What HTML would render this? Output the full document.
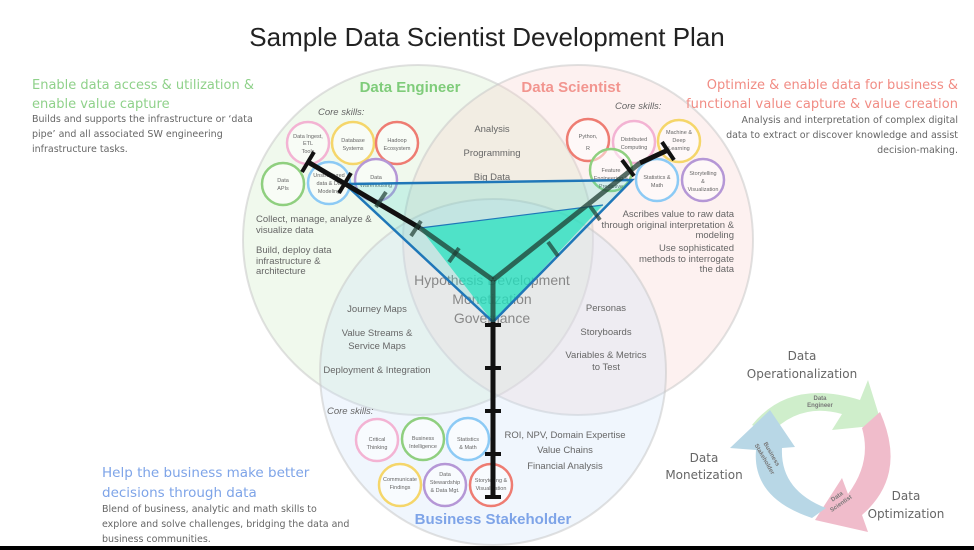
<!DOCTYPE html>
<html><head><meta charset="utf-8"><style>
body{margin:0;width:974px;height:550px;overflow:hidden;background:#fff;font-family:"Liberation Sans",sans-serif}
svg{position:absolute;left:0;top:0}
</style></head><body>
<svg width="974" height="550" viewBox="0 0 974 550" font-family="Liberation Sans, sans-serif">
<rect x="0" y="546" width="974" height="4" fill="#000"/>
<text x="487" y="46" text-anchor="middle" font-size="26" fill="#222">Sample Data Scientist Development Plan</text>
<!-- venn -->
<circle cx="418" cy="240" r="175" fill="rgba(205,235,195,0.3)" stroke="rgba(200,200,200,0.55)" stroke-width="2"/>
<circle cx="578" cy="240" r="175" fill="rgba(250,210,205,0.3)" stroke="rgba(200,200,200,0.55)" stroke-width="2"/>
<circle cx="493" cy="372" r="173" fill="rgba(205,225,250,0.3)" stroke="rgba(200,200,200,0.55)" stroke-width="2"/>
<text x="410" y="92" text-anchor="middle" font-size="15" font-weight="bold" fill="#7fcc7a">Data Engineer</text>
<text x="571" y="92" text-anchor="middle" font-size="15" font-weight="bold" fill="#f2958f">Data Scientist</text>
<text x="493" y="524" text-anchor="middle" font-size="15" font-weight="bold" fill="#7ea4e8">Business Stakeholder</text>
<g font-size="9.5" fill="#666" font-style="italic">
<text x="318" y="115">Core skills:</text><text x="615" y="109">Core skills:</text><text x="327" y="414">Core skills:</text></g>
<g font-size="9.5" fill="#666" text-anchor="middle">
<text x="492" y="132">Analysis</text><text x="492" y="156">Programming</text><text x="492" y="180">Big Data</text>
<text x="377" y="312">Journey Maps</text><text x="377" y="336">Value Streams &amp;</text><text x="377" y="349">Service Maps</text><text x="377" y="373">Deployment &amp; Integration</text>
<text x="606" y="311">Personas</text><text x="606" y="335">Storyboards</text><text x="606" y="358">Variables &amp; Metrics</text><text x="606" y="370">to Test</text>
<text x="565" y="438">ROI, NPV, Domain Expertise</text><text x="565" y="453">Value Chains</text><text x="565" y="469">Financial Analysis</text>
</g>
<g font-size="9.5" fill="#666">
<text x="256" y="222">Collect, manage, analyze &amp;</text><text x="256" y="233">visualize data</text>
<text x="256" y="253">Build, deploy data</text><text x="256" y="264">infrastructure &amp;</text><text x="256" y="274">architecture</text></g>
<g font-size="9.5" fill="#666" text-anchor="end">
<text x="734" y="217">Ascribes value to raw data</text><text x="734" y="228">through original interpretation &amp;</text><text x="734" y="238">modeling</text>
<text x="734" y="251">Use sophisticated</text><text x="734" y="262">methods to interrogate</text><text x="734" y="272">the data</text></g>
<g font-size="14" fill="#888" text-anchor="middle"><text x="492" y="285">Hypothesis Development</text><text x="492" y="304">Monetization</text><text x="492" y="323">Governance</text></g>
<!-- skill circles -->
<g fill="rgba(255,255,255,0.5)" stroke-width="2.5">
<circle cx="308" cy="143" r="21" stroke="#f3b3d3"/><circle cx="353" cy="143" r="21" stroke="#f5d66a"/><circle cx="397" cy="143" r="21" stroke="#ee7c72"/>
<circle cx="283" cy="184" r="21" stroke="#8fcf7f"/><circle cx="329" cy="183" r="21" stroke="#8ccaf5"/><circle cx="376" cy="180" r="21" stroke="#b597d6"/>
<circle cx="588" cy="140" r="21" stroke="#ee7c72"/><circle cx="634" cy="142" r="21" stroke="#f3b3d3"/><circle cx="679" cy="141" r="21" stroke="#f5d66a"/>
<circle cx="611" cy="170" r="21" stroke="#8fcf7f"/><circle cx="657" cy="180" r="21" stroke="#8ccaf5"/><circle cx="703" cy="180" r="21" stroke="#b597d6"/>
<circle cx="377" cy="440" r="21" stroke="#f3b3d3"/><circle cx="423" cy="439" r="21" stroke="#8fcf7f"/><circle cx="468" cy="439" r="21" stroke="#8ccaf5"/>
<circle cx="400" cy="485" r="21" stroke="#f5d66a"/><circle cx="445" cy="485" r="21" stroke="#b597d6"/><circle cx="491" cy="485" r="21" stroke="#ee7c72"/>
</g>
<g font-size="5.5" fill="#666" text-anchor="middle">
<text x="308" y="138">Data Ingest,</text><text x="308" y="145">ETL</text><text x="308" y="153">Tools</text>
<text x="353" y="142">Database</text><text x="353" y="150">Systems</text>
<text x="397" y="142">Hadoop</text><text x="397" y="150">Ecosystem</text>
<text x="283" y="182">Data</text><text x="283" y="190">APIs</text>
<text x="329" y="177">Unstructured</text><text x="329" y="185">data &amp; DB</text><text x="329" y="193">Modeling</text>
<text x="376" y="179">Data</text><text x="376" y="187">Warehousing</text>
<text x="588" y="138">Python,</text><text x="588" y="150">R</text>
<text x="634" y="141">Distributed</text><text x="634" y="149">Computing</text>
<text x="679" y="134">Machine &amp;</text><text x="679" y="142">Deep</text><text x="679" y="150">Learning</text>
<text x="611" y="172">Feature</text><text x="611" y="180">Engineering &amp;</text><text x="611" y="188">Predictive</text>
<text x="657" y="179">Statistics &amp;</text><text x="657" y="187">Math</text>
<text x="703" y="175">Storytelling</text><text x="703" y="183">&amp;</text><text x="703" y="191">Visualization</text>
<text x="377" y="441">Critical</text><text x="377" y="449">Thinking</text>
<text x="423" y="440">Business</text><text x="423" y="448">Intelligence</text>
<text x="468" y="441">Statistics</text><text x="468" y="449">&amp; Math</text>
<text x="400" y="481">Communicate</text><text x="400" y="489">Findings</text>
<text x="445" y="476">Data</text><text x="445" y="484">Stewardship</text><text x="445" y="492">&amp; Data Mgt.</text>
<text x="491" y="482">Storytelling &amp;</text><text x="491" y="490">Visualization</text>
</g>
<!-- triangle -->
<polygon points="345,184 632,180 493,322" fill="rgba(70,215,200,0.22)"/>
<polygon points="420,228 603,205 493,322" fill="rgba(30,225,190,0.7)"/>
<polyline points="345,184 632,180 493,322 345,184" fill="none" stroke="#1f77b8" stroke-width="2.5"/>
<line x1="420" y1="228" x2="603" y2="205" stroke="#1f77b8" stroke-width="1.2"/>
<!-- axes -->
<g stroke="#111" stroke-width="5">
<line x1="308" y1="162" x2="420" y2="228"/><line x1="640" y1="163" x2="668" y2="150"/><line x1="493" y1="322" x2="493" y2="497"/></g>
<g stroke="rgba(30,60,50,0.75)" stroke-width="5"><line x1="420" y1="228" x2="493" y2="280"/><line x1="493" y1="280" x2="640" y2="163"/><line x1="493" y1="280" x2="493" y2="322"/></g>
<g stroke="#111" stroke-width="4">
<line x1="302" y1="172" x2="314" y2="152"/><line x1="339" y1="193" x2="351" y2="173"/>
<line x1="662" y1="142" x2="674" y2="160"/><line x1="622" y1="160" x2="634" y2="176"/>
<line x1="485" y1="325" x2="501" y2="325"/><line x1="485" y1="368" x2="501" y2="368"/><line x1="485" y1="411" x2="501" y2="411"/><line x1="485" y1="454" x2="501" y2="454"/><line x1="485" y1="497" x2="501" y2="497"/>
</g>
<g stroke="rgba(30,60,50,0.7)" stroke-width="4"><line x1="376" y1="207" x2="386" y2="192"/><line x1="411" y1="236" x2="421" y2="221"/><line x1="449" y1="262" x2="459" y2="248"/><line x1="548" y1="242" x2="558" y2="256"/><line x1="590" y1="206" x2="600" y2="220"/></g>
<!-- side texts -->
<g font-family="DejaVu Sans, sans-serif">
<text x="32" y="89" font-size="13" fill="#8fd18a" textLength="222">Enable data access &amp; utilization &amp;</text>
<text x="32" y="108" font-size="13" fill="#8fd18a">enable value capture</text>
<g font-size="9.5" fill="#666"><text x="32" y="122">Builds and supports the infrastructure or ‘data</text><text x="32" y="137">pipe’ and all associated SW engineering</text><text x="32" y="152">infrastructure tasks.</text></g>
<g text-anchor="end"><text x="958" y="89" font-size="13" fill="#f18c84">Optimize &amp; enable data for business &amp;</text>
<text x="958" y="108" font-size="13" fill="#f18c84" textLength="272">functional value capture &amp; value creation</text>
<g font-size="9.5" fill="#666"><text x="958" y="123">Analysis and interpretation of complex digital</text><text x="958" y="138">data to extract or discover knowledge and assist</text><text x="958" y="153">decision-making.</text></g></g>
<text x="102" y="477" font-size="13.5" fill="#7ea4e8">Help the business make better</text>
<text x="102" y="497" font-size="13.5" fill="#7ea4e8">decisions through data</text>
<g font-size="9.5" fill="#666"><text x="102" y="512">Blend of business, analytic and math skills to</text><text x="102" y="527">explore and solve challenges, bridging the data and</text><text x="102" y="542">business communities.</text></g>
<!-- cycle -->
<g font-size="12" fill="#666" text-anchor="middle">
<text x="802" y="360">Data</text><text x="802" y="378">Operationalization</text>
<text x="704" y="462">Data</text><text x="704" y="479">Monetization</text>
<text x="906" y="500">Data</text><text x="906" y="518">Optimization</text></g>
</g>
<path d="M752,425 Q790,378 860,400 L868,380 L882,425 L832,430 L842,414 Q800,402 770,434 Z" fill="#cfeecb"/>
<path d="M880,412 Q908,475 862,515 L868,532 L815,520 L842,478 L848,494 Q872,462 862,428 Z" fill="#f0bccb"/>
<path d="M812,518 Q752,498 756,450 L730,448 L770,410 L795,447 L782,448 Q780,490 826,508 Z" fill="#b8d7e6"/>
<g font-size="6" font-weight="bold" fill="#777" text-anchor="middle">
<text x="820" y="400">Data</text><text x="820" y="407">Engineer</text>
<text transform="translate(838,498) rotate(-35)">Data</text><text transform="translate(842,505) rotate(-35)">Scientist</text>
<text transform="translate(770,455) rotate(60)">Business</text><text transform="translate(763,460) rotate(60)">Stakeholder</text></g>
</svg>
</body></html>
